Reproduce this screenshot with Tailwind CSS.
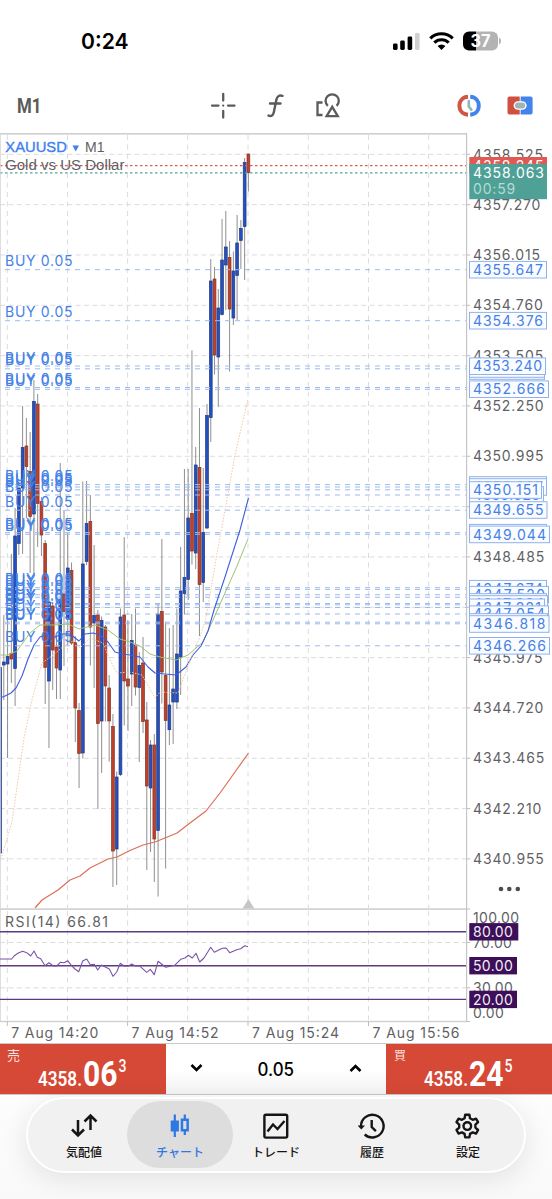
<!DOCTYPE html>
<html lang="ja">

<head>
    <meta charset="UTF-8">
    <meta name="viewport" content="width=device-width, initial-scale=1.0">
    <title>XAUUSD M1</title>
    <script src="https://cdn.jsdelivr.net/npm/@tailwindcss/browser@4"></script>
</head>

<body class="bg-white">
    <div class="w-[552px] h-[1199px] flex flex-col overflow-hidden bg-white font-['Inter','Noto_Sans_CJK_JP',sans-serif]">

        <!-- status bar -->
        <div class="h-[82px] flex items-center justify-between pl-[80px] pr-[50px]">
            <svg class="w-[52px] h-6" viewBox="0 0 52 24">
                <text x="1" y="20" font-size="22" font-weight="600" textLength="47.5" lengthAdjust="spacingAndGlyphs">0:24</text>
            </svg>
            <div class="flex items-center gap-2">
                <svg class="w-7 h-5" viewBox="0 0 28 20">
                    <rect x="0" y="12.5" width="4.6" height="6.5" rx="1.4" />
                    <rect x="7.2" y="9.5" width="4.6" height="9.5" rx="1.4" />
                    <rect x="14.6" y="5.5" width="4.6" height="13.500" rx="1.4" />
                    <rect x="22" y="2" width="4.6" height="17" rx="1.4" fill="#d0d0d0" />
                </svg>
                <svg class="w-[25px] h-5" viewBox="0 0 25 20">
                    <g fill="none" stroke="#000" stroke-width="3.2">
                        <path d="M1.3 7.3a16 16 0 0 1 22.4 0" />
                        <path d="M5.3 11.7a10.3 10.3 0 0 1 14.4 0" />
                    </g>
                    <path d="M12.5 19l3.9-4a5.6 5.6 0 0 0-7.8 0z" />
                </svg>
                <svg class="w-10 h-5" viewBox="0 0 40 20">
                    <path d="M14 .5H7a6 6 0 0 0-6 6v7a6 6 0 0 0 6 6h7z" />
                    <path d="M14 .5h16a6 6 0 0 1 6 6v7a6 6 0 0 1-6 6H14z" fill="#b3b3b3" />
                    <path d="M37 6.5q2 .6 2 3.5t-2 3.5z" fill="#b3b3b3" />
                    <text x="8.500" y="16" font-size="17" font-weight="700" fill="#fff" textLength="20" lengthAdjust="spacingAndGlyphs">37</text>
                </svg>
            </div>
        </div>

        <!-- toolbar -->
        <div class="h-[51px] flex items-start pt-[9px] pl-4 pr-[18px] text-[#5b5b5b]">
            <svg class="w-7 h-7" viewBox="0 0 28 28">
                <text x="1" y="21.5" font-family="Roboto" font-size="20.5" font-weight="700" fill="#5b5b5b" textLength="24.5" lengthAdjust="spacingAndGlyphs">M1</text>
            </svg>
            <svg class="w-7 h-7 ml-[165px]" viewBox="0 0 28 28" stroke="currentColor" stroke-width="2.3" stroke-linecap="round">
                <path d="M14.2 3v6.500M14.2 20v6.500M3 14.600h6.500M19 14.600h6.500M14.2 14.600v.01" />
            </svg>
            <svg class="w-7 h-7 ml-[25px]" viewBox="0 0 28 28" fill="none" stroke="currentColor" stroke-width="2.4" stroke-linecap="round">
                <path d="M20.500 4.800c-3-1-5.300.2-6 3.500l-2.700 13c-.6 3-2.400 4.300-5.300 3.300M8 12.500h10.500" />
            </svg>
            <svg class="w-7 h-7 ml-[23px]" viewBox="0 0 28 28" fill="none" stroke="currentColor" stroke-width="2.3">
                <path d="M9.500 11.500H4.500v12.500h5" />
                <path d="M14.800 14.800a6.600 6.600 0 1 1 8.800 0" />
                <path d="M19.200 15.800l-5.600 9.400h11.200z" />
            </svg>
            <svg class="w-7 h-7 ml-[114px]" viewBox="0 0 28 28" fill="none">
                <path d="M13 5.800c-11.500 .8-11.500 17.100 0 17.900" stroke="#d05545" stroke-width="4" />
                <path d="M15.200 5.800c11.500 .8 11.500 17.100 0 17.900" stroke="#4384ec" stroke-width="4" />
                <path d="M13.800 10v5.500l2.600 3.300" stroke="#95b4b4" stroke-width="2.6" stroke-linecap="round" />
            </svg>
            <svg class="w-7 h-7 ml-[23px]" viewBox="0 0 28 28">
                <path d="M3.500 5.500h10.200v18H3.500a2 2 0 0 1-2-2v-14a2 2 0 0 1 2-2z" fill="#cf4f40" />
                <path d="M14.600 5.500h10a2 2 0 0 1 2 2v14a2 2 0 0 1-2 2h-10z" fill="#4384ec" />
                <rect x="7.6" y="10.200" width="13" height="8.600" rx="4.3" fill="#fff" />
                <rect x="9" y="11.600" width="10.200" height="5.800" rx="2.9" fill="#9db5b5" />
            </svg>
        </div>

        <!-- chart, y axis of the viewBox starts below the header -->
        <svg id="chart" class="block w-[552px] h-[910px] shrink-0" viewBox="0 133 552 910"></svg>

        <!-- one click trading -->
        <div class="h-[52px] shrink-0 flex border-y border-[#c9c9c9]">
            <div class="w-[166px] bg-[#d54936]">
                <svg class="w-full h-full" viewBox="0 0 166 50" fill="#fff" font-family="Roboto">
                    <text x="7" y="15.5" font-size="13" font-family="Noto Sans CJK JP" fill="#fbe3df">売</text>
                    <text x="38" y="42" font-size="20.5" font-weight="600" textLength="44" lengthAdjust="spacingAndGlyphs">4358.</text>
                    <text x="83" y="42" font-size="35" font-weight="700" textLength="34.5" lengthAdjust="spacingAndGlyphs">06</text>
                    <text x="118.5" y="27.5" font-size="18" font-weight="500" textLength="8" lengthAdjust="spacingAndGlyphs">3</text>
                </svg>
            </div>
            <div class="flex-1 flex items-center justify-between px-6 bg-linear-to-b from-white via-white to-[#f4f4f4]">
                <svg class="w-3.5 h-3 -translate-y-px" viewBox="0 0 14 12" fill="none" stroke="#000" stroke-width="2.6">
                    <path d="M1.500 3l5 5 5-5" />
                </svg>
                <svg class="w-10 h-6" viewBox="0 0 40 24">
                    <text x="1.5" y="19" font-size="18" font-weight="500" textLength="36.5" lengthAdjust="spacingAndGlyphs">0.05</text>
                </svg>
                <svg class="w-3.5 h-3 -translate-y-px" viewBox="0 0 14 12" fill="none" stroke="#000" stroke-width="2.6">
                    <path d="M2.500 9l5-5 5 5" />
                </svg>
            </div>
            <div class="w-[166px] bg-[#d54936]">
                <svg class="w-full h-full" viewBox="0 0 166 50" fill="#fff" font-family="Roboto">
                    <text x="8" y="15.5" font-size="12" font-family="Noto Sans CJK JP" fill="#fbe3df">買</text>
                    <text x="38" y="42" font-size="20.5" font-weight="600" textLength="44" lengthAdjust="spacingAndGlyphs">4358.</text>
                    <text x="83" y="42" font-size="35" font-weight="700" textLength="34.5" lengthAdjust="spacingAndGlyphs">24</text>
                    <text x="118.5" y="27.5" font-size="18" font-weight="500" textLength="8" lengthAdjust="spacingAndGlyphs">5</text>
                </svg>
            </div>
        </div>

        <!-- tab bar -->
        <div class="flex-1 pt-0.5 bg-linear-to-b from-[#fdfdfd] to-[#f9f9f9]">
            <div class="mx-auto w-[500px] h-[76px] flex justify-center items-start pt-0.5 rounded-full border-2 border-white bg-[#f1f1f1] shadow-[0_6px_28px_rgba(0,0,0,0.10)] font-medium text-[#151515]">
                <div class="w-24 h-[67px] flex flex-col items-center pt-3 gap-1">
                    <svg class="w-7 h-7" viewBox="0 0 28 28" fill="none" stroke="currentColor" stroke-width="2.5">
                        <path d="M8 7v15M2 16.5l6 6 6-6M20.5 17V2.500M14.5 8.500l6-6 6 6" />
                    </svg>
                    <span class="text-[12px]/4">気配値</span>
                </div>
                <div class="w-[106px] -mx-[5px] h-[67px] flex flex-col items-center pt-3 gap-1 rounded-[34px] bg-[#dddddd] text-[#2f78e4]">
                    <svg class="w-7 h-7" viewBox="0 0 28 28" fill="currentColor">
                        <path d="M7.700 1.500h2.200v6h3v11h-3v5.500H7.700v-5.500h-3v-11h3z" />
                        <path fill-rule="evenodd" d="M17.700 1.500h2.200V5.500h3v13h-3V22h-2.200v-3.500h-3v-13h3zM17.200 8v8h3.200V8z" />
                    </svg>
                    <span class="text-[12px]/4">チャート</span>
                </div>
                <div class="w-24 h-[67px] flex flex-col items-center pt-3 gap-1">
                    <svg class="w-7 h-7" viewBox="0 0 28 28" fill="none" stroke="currentColor" stroke-width="2.4">
                        <rect x="2.4" y="1.8" width="22.8" height="22.8" rx="1.5" />
                        <path d="M5.500 18.500l5.500-7 4.5 4.500L22.5 8" />
                    </svg>
                    <span class="text-[12px]/4">トレード</span>
                </div>
                <div class="w-24 h-[67px] flex flex-col items-center pt-3 gap-1">
                    <svg class="w-7 h-7" viewBox="0 0 28 28" fill="none" stroke="currentColor" stroke-width="2.4">
                        <path d="M3 13a11.300 11.300 0 1 1 3.700 8.500" />
                        <path d="M13.700 7v7l4.2 4.200" />
                        <path d="M-.5 12.500h7.500l-3.750 4z" fill="currentColor" stroke="none" />
                    </svg>
                    <span class="text-[12px]/4">履歴</span>
                </div>
                <div class="w-24 h-[67px] flex flex-col items-center pt-3 gap-1">
                    <svg class="w-7 h-7" viewBox="0 0 28 28" fill="none" stroke="currentColor" stroke-width="2.4" stroke-linejoin="round">
                        <path d="M11.200 1.800h4.200l.6 3.500 2.700 1.500 3.300-1.200 2.100 3.600-2.700 2.400v3l2.700 2.400-2.100 3.600-3.300-1.200-2.700 1.500-.6 3.500h-4.200l-.6-3.500-2.700-1.500-3.300 1.200-2.100-3.600 2.700-2.400v-3L2.500 9.200l2.100-3.600 3.300 1.200 2.700-1.500z" />
                        <circle cx="13.300" cy="13.100" r="3.800" />
                    </svg>
                    <span class="text-[12px]/4">設定</span>
                </div>
            </div>
        </div>
    </div>

    <script>
        const chart = document.getElementById('chart');
        let out = '';

        const line = (x1, y1, x2, y2, color, w, dash) => {
            out += `<line x1="${x1}" y1="${y1}" x2="${x2}" y2="${y2}" stroke="${color}" stroke-width="${w}"${dash ? ` stroke-dasharray="${dash}"` : ''}/>`;
        };
        const rect = (x, y, w, h, fill, stroke) => {
            out += `<rect x="${x}" y="${y}" width="${w}" height="${h}" fill="${fill}" stroke="${stroke || 'none'}"/>`;
        };
        const text = (x, y, s, color, extra) => {
            out += `<text x="${x}" y="${y}" fill="${color}" ${extra || 'font-size="14" letter-spacing="0.85"'}>${s}</text>`;
        };
        const poly = (pts, color, w, dash) => {
            out += `<polyline points="${pts}" fill="none" stroke="${color}" stroke-width="${w}" stroke-linejoin="round"${dash ? ` stroke-dasharray="${dash}"` : ''}/>`;
        };

        const GREY = '#5f5f64';
        const BLUE = '#4582e8';
        const GRID = '#dcdce0';

        // grid
        const cols = [7.3, 67.5, 127.6, 187.7, 248, 308.3, 368.5, 428.7];
        cols.forEach(x => {
            line(x, 135, x, 908, GRID, 1, '5 4.5');
            line(x, 911, x, 1020, GRID, 1, '5 4.5');
        });
        for (let i = 0; i < 15; i++) {
            const y = 154.3 + i * 50.33;
            line(0, y, 466, y, GRID, 1, '5 3.4');
            line(467, y, 470, y, '#bdbdbd', 1);
            text(473, y + 5.2, (4358.525 - i * 1.255).toFixed(3), GREY);
        }

        // candles, newest first: [type, high, low, body top, body bottom]
        const candles = [
            ['r', 154, 191.5, 154, 172.7], ['b', 158, 280, 162.5, 226.5], ['b', 220, 269, 228.5, 240.5],
            ['b', 215, 320, 243, 275.5], ['b', 251.5, 325, 271, 318], ['r', 241, 371.5, 257.5, 309],
            ['b', 211, 310, 247, 265], ['b', 219, 315.5, 260, 314.5], ['b', 289, 407, 308, 357],
            ['r', 267, 374.5, 279, 355], ['b', 259, 442, 281, 417.5], ['b', 404, 529, 415.5, 528],
            ['b', 468, 602, 532.5, 582.5], ['r', 408, 636, 467.5, 584.5], ['b', 447, 569, 465, 553],
            ['r', 350.5, 564.5, 513.5, 551], ['b', 469, 600, 518, 579.5], ['b', 469, 614.5, 577.5, 593.5],
            ['b', 547, 695, 591, 657], ['b', 608.5, 709, 654, 702], ['b', 625, 744, 689, 702],
            ['b', 628, 745, 705, 729.7], ['r', 622, 868.5, 675.5, 720.5], ['r', 539, 703.5, 611.5, 672],
            ['b', 603.5, 896.5, 614, 830.5], ['r', 734, 882, 745, 839], ['b', 740, 852, 745, 788],
            ['r', 702, 870, 720, 786], ['r', 637, 733, 663, 721.5], ['b', 652, 762, 665.5, 687.5],
            ['r', 608.5, 695.5, 645, 687], ['b', 614, 706, 640.5, 674], ['r', 620.5, 731, 679, 686],
            ['r', 537, 725.5, 615, 681], ['b', 608.5, 776, 617, 774.5], ['b', 771.5, 885, 777, 849],
            ['r', 714, 887, 726.5, 851], ['r', 675, 761.5, 688, 721], ['r', 625, 721.5, 627, 686],
            ['b', 616.5, 773, 620.5, 721], ['r', 610, 809, 615, 723.5], ['b', 545, 688, 615.5, 623],
            ['r', 495, 665.5, 521.5, 627], ['b', 481, 565, 523.5, 561.5], ['b', 481.5, 758.5, 564, 753],
            ['r', 703, 788, 710.5, 753.5], ['r', 636, 742, 642.5, 708], ['r', 562.5, 645, 570.5, 643],
            ['b', 533, 645, 568, 619], ['r', 510, 666, 594, 611.5], ['b', 463, 699, 600, 670],
            ['r', 636, 699, 647, 668], ['r', 602, 690, 606, 650], ['b', 596, 748, 602, 681],
            ['r', 540, 704, 543.5, 667.5], ['r', 497, 556, 501.5, 535], ['r', 394, 547, 404, 503.5],
            ['b', 380, 575, 401.5, 514], ['r', 432, 573, 471.5, 516.5], ['r', 418, 518, 446, 466.5],
            ['b', 406, 554, 447.5, 488], ['b', 480, 555, 488, 543.5], ['b', 508, 706, 536, 668.5],
            ['r', 554, 683, 653.5, 659], ['b', 615, 758, 656.5, 664], ['b', 615, 700, 662, 665],
            ['b', 667, 853, 667.5, 853]
        ];
        candles.forEach((c, i) => {
            const x = 248.4 - i * 3.763;
            line(x, c[1], x, c[2], '#828282', 0.9);
            const blue = c[0] == 'b';
            out += `<rect x="${x - 1.4}" y="${c[3]}" width="2.8" height="${c[4] - c[3]}" fill="${blue ? '#2450c0' : '#c2402a'}" stroke="${blue ? '#233a80' : '#823325'}" stroke-width="0.7"/>`;
        });

        // open positions
        const levels = [269.7, 320.7, 366, 368.8, 387.5, 389.3, 484.6, 487, 489.8, 495, 510.2, 532.6, 534.3,
            587.7, 589.4, 594.7, 597.2, 603.5, 604.8, 607.5, 614, 622.2, 623.8, 645.8];
        levels.forEach(y => {
            line(5, y, 466, y, '#9dbaf0', 1, '5 5');
            text(5, y - 3.4, 'BUY 0.05', BLUE, 'font-size="14" textLength="67.5"');
        });

        // moving averages
        poly('0,655 8,655 17,651 30,633 40,625 55,625 68,624 79,629 95,625 108,630 120,639 130,642 140,646 150,654 160,657 176,660 188,655 203,642 213,620 225,593 237,566 248,539', '#9cc277', 1);
        poly('0,698 5,696 11,693 16,688 22,676 28,659 34,645 40,637 46,635 55,637 62,634 70,634 79,641 85,634 93,633 100,635 108,642 115,652 122,654 130,655 140,657 148,667 155,673 165,674 176,675 186,667 193,655 201,646 208,631 214,610 225,577 240,530 248.5,498', '#3c5fdc', 1.1);
        poly('0,862 5,845 12,822 18,780 24,738 32,700 42,663 52,656 65,645 75,640 80,648 90,638 103,643 110,660 117,673 130,672 142,675 155,698 160,692 178,693 190,660 200,637 206,618 215,565 225,510 235,455 248,399', '#f2c8a0', 1, '1.5 1.5');
        poly('35,908 42,900 58,890 70,880 80,876 90,868 108,859 117,857 130,850.5 143,845 155,842 165,838 177,833 190,823 206,811 220,793 235,772 248.5,753', '#dd6e58', 1.2);

        // bid and ask
        line(0, 165.6, 466, 165.6, '#dc5b55', 1.3, '2.5 2.5');
        line(0, 172.8, 466, 172.8, '#58a297', 1.3, '2.5 2.5');

        const head = 'font-family="Liberation Sans" font-size="15.5" lengthAdjust="spacingAndGlyphs"';
        text(5.3, 152, 'XAUUSD', '#3f7ff0', head + ' textLength="61.5" stroke="#3f7ff0" stroke-width="0.4"');
        out += '<path d="M72.5 145.5h6.5l-3.25 6z" fill="#3f7ff0"/>';
        text(85, 152, 'M1', GREY, head + ' textLength="19.5"');
        text(5, 170.4, 'Gold vs US Dollar', GREY, head + ' textLength="119.5"');

        // frame
        rect(0, 133, 467, 1.6, '#cfcfd1');
        rect(0, 908.3, 467, 1.6, '#cfcfd1');
        rect(0, 1020.8, 467, 1.4, '#cfcfd1');
        rect(466, 133, 1.2, 889, '#c6c6c8');
        rect(0, 134, 0.8, 887, '#d6d6d8');
        out += '<path d="M242.5 908.5L248.4 899l5.9 9.5z" fill="#c6c6c8"/>';

        // position price tags: [y, price, width], later ones cover the earlier
        const tags = [
            [269.7, '4355.647', 77], [320.7, '4354.376', 77], [371, '4353.182', 75], [369, '4353.176', 75], [366.2, '4353.240', 76],
            [389.2, '4352.666', 79], [485, '4350.294', 77], [487, '4350.227', 77], [495, '4350.028', 74],
            [510, '4349.655', 77.5], [490, '4350.151', 72], [532.7, '4349.089', 77], [534.4, '4349.044', 80],
            [588.7, '4347.674', 77], [594.7, '4347.520', 79], [602, '4347.483', 77], [604, '4347.304', 78],
            [607.3, '4347.221', 75], [614.2, '4347.054', 79], [622, '4346.857', 78], [624, '4346.818', 79.5], [645.8, '4346.266', 80]
        ];
        tags.forEach(t => {
            rect(469.5, t[0] - 8.3, t[2], 16.6, '#fafcff', '#8fb2ee');
            text(473, t[0] + 5.2, t[1], BLUE, `font-size="14" textLength="${t[2] - 7}"`);
        });
        rect(469.3, 157, 77.7, 16, '#e05a53');
        text(473, 170.5, '4358.245', '#fff');
        rect(469.3, 164, 77.7, 35.2, '#4fa096');
        text(473, 178, '4358.063', '#fff', 'font-size="14" textLength="71"');
        text(473, 194.3, '00:59', '#b5dcd5');
        [501, 509.3, 517.8].forEach(x => { out += `<circle cx="${x}" cy="889" r="2.3" fill="#4c4c50"/>`; });

        // RSI window
        [942.5, 987.8].forEach(y => {
            line(0, y, 466, y, GRID, 1, '5 3.4');
            line(467, y, 470, y, '#bdbdbd', 1);
        });
        [909, 1021.5].forEach(y => line(467, y, 470, y, '#bdbdbd', 1));
        [931.8, 965.7, 999.4].forEach(y => line(0, y, 466, y, '#5f3a80', 1.4));
        const rsi = '0,237 35,237 42,228 55,219 68,214 80,218 92,228 102,213 112,232 122,236 135,257 147,248 160,258 170,258 181,247 192,248 203,242 214,256 225,267 236,275 248,243 260,237 271,254 283,253 293,270 304,255 328,267 339,289 350,276 361,250 372,258 384,259 395,252 406,258 418,257 440,277 451,268 463,284 474,244 497,262 524,256 542,238 555,234 565,226 577,234 588,220 599,246 612,234 632,202 643,217 667,205 678,204 689,218 710,209 722,206 734,197 744,200';
        poly(rsi.split(' ').map(p => {
            const [x, y] = p.split(',');
            return (x / 3).toFixed(1) + ',' + (880 + y / 3).toFixed(1);
        }).join(' '), '#7a55a8', 1.1);
        text(5, 926.8, 'RSI(14) 66.81', GREY, 'font-size="14" textLength="103"');
        const small = 'font-size="14" letter-spacing="0.35"';
        text(473, 923.4, '100.00', GREY, small);
        text(473, 948, '70.00', GREY, small);
        text(473, 993, '30.00', GREY, small);
        text(473, 1018.3, '0.00', GREY, small);
        [[931.8, '80.00', 49], [965.7, '50.00', 47.7], [999.4, '20.00', 47.7]].forEach(t => {
            rect(469.3, t[0] - 8.7, t[2], 17.4, '#3c0f58');
            text(473, t[0] + 5.2, t[1], '#f3edf7', small);
        });

        // time axis
        [[7.3, '7 Aug 14:20'], [127.6, '7 Aug 14:52'], [248, '7 Aug 15:24'], [368.5, '7 Aug 15:56']].forEach(t => {
            line(t[0], 1021, t[0], 1026, '#bdbdbd', 1);
            text(t[0] + 4, 1038, t[1], GREY, 'font-size="14" textLength="87"');
        });

        chart.innerHTML = out;
    </script>
</body>

</html>
